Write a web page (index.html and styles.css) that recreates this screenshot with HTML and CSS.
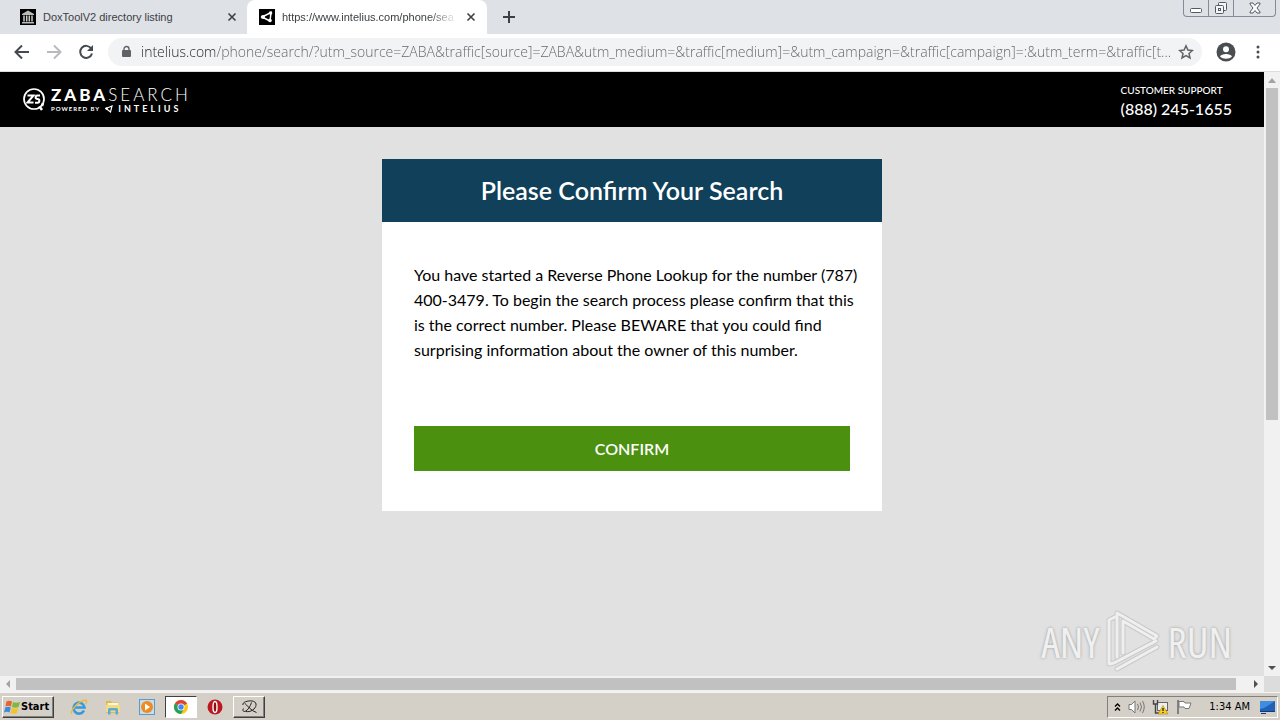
FILE: index.html
```html
<!DOCTYPE html>
<html lang="en">
<head>
    <meta charset="utf-8">
    <title>Please Confirm Your Search</title>
    <link rel="stylesheet" href="styles.css">
</head>
<body>

    <!-- Tabs -->
    <div class="tab-strip">
        <div class="tab">
            <svg class="tab-icon" viewBox="0 0 16 16">
                <rect width="16" height="16" fill="#000"/>
                <path d="M2 5 8 1.500 14 5v1H2zM2 13h12v1.500H2z" fill="#bbb"/>
                <path d="M4 6.500v6M6.700 6.500v6M9.300 6.500v6M12 6.500v6" stroke="#ccc" stroke-width="1.500"/>
            </svg>
            <span class="tab-title">DoxToolV2 directory listing</span>
            <button class="tab-close" aria-label="Close tab">
                <svg width="10" height="10" viewBox="0 0 10 10"><path d="M1.500 1.500l7 7M8.500 1.500l-7 7" stroke="#3c4043" stroke-width="1.600"/></svg>
            </button>
        </div>
        <div class="tab tab-active">
            <svg class="tab-icon" viewBox="0 0 16 16">
                <rect width="16" height="16" fill="#000"/>
                <path d="M3 8 12 3.500 11 12z" fill="none" stroke="#fff" stroke-width="1.500"/>
                <circle cx="4" cy="8" r="2" fill="#fff"/>
                <circle cx="11.500" cy="4" r="1.800" fill="#fff"/>
                <circle cx="11" cy="11.500" r="1.800" fill="#fff"/>
            </svg>
            <span class="tab-title tab-title-fade">https://www.intelius.com/phone/sea</span>
            <button class="tab-close" aria-label="Close tab">
                <svg width="10" height="10" viewBox="0 0 10 10"><path d="M1.500 1.500l7 7M8.500 1.500l-7 7" stroke="#3c4043" stroke-width="1.600"/></svg>
            </button>
        </div>
        <button class="new-tab" aria-label="New tab">
            <svg width="12" height="12" viewBox="0 0 12 12"><path d="M6 0v12M0 6h12" stroke="#3c4043" stroke-width="2"/></svg>
        </button>
        <div class="window-buttons">
            <button class="window-button" aria-label="Minimize">
                <svg width="12" height="12" viewBox="0 0 12 12"><rect x=".5" y="6.500" width="11" height="4" rx="1" fill="#fff" stroke="#555b66"/></svg>
            </button>
            <button class="window-button" aria-label="Restore">
                <svg width="14" height="14" viewBox="0 0 14 14" fill="#f4f5f7" stroke="#555b66">
                    <rect x="4.500" y="1.500" width="8" height="8" rx="1"/>
                    <rect x="1.500" y="4.500" width="8" height="8" rx="1"/>
                    <rect x="4.500" y="7.500" width="2" height="2"/>
                </svg>
            </button>
            <button class="window-button window-button-close" aria-label="Close">
                <svg width="12" height="12" viewBox="0 0 12 12"><path d="M1 1h3l2 2.500L8 1h3v1L8 6l3 4v1H8L6 8.500 4 11H1v-1l3-4-3-4z" fill="#fff" stroke="#555b66"/></svg>
            </button>
        </div>
    </div>

    <!-- Address bar -->
    <div class="toolbar">
        <button class="nav-button" aria-label="Back">
            <svg width="16" height="16" viewBox="0 0 16 16" fill="none" stroke="#46494d" stroke-width="2"><path d="M15 8H2M8 1.500 1.500 8 8 14.500"/></svg>
        </button>
        <button class="nav-button" aria-label="Forward">
            <svg width="16" height="16" viewBox="0 0 16 16" fill="none" stroke="#b8babd" stroke-width="2"><path d="M1 8h13M8 1.500 14.500 8 8 14.500"/></svg>
        </button>
        <button class="nav-button" aria-label="Reload">
            <svg width="16" height="16" viewBox="0 0 16 16"><path d="M13.200 4.500A6 6 0 1 0 14 9.500" fill="none" stroke="#46494d" stroke-width="2"/><path d="M15 1v6H9z" fill="#46494d"/></svg>
        </button>
        <div class="address">
            <svg width="10" height="14" viewBox="0 0 10 14"><rect x="1" y="5" width="9" height="7" rx="1" fill="#5f6368"/><path d="M3 5.500V4a2.500 2.500 0 0 1 5 0v1.500" fill="none" stroke="#5f6368" stroke-width="1.400"/></svg>
            <input class="address-input" type="text" aria-label="Address" value="intelius.com/phone/search/?utm_source=ZABA&amp;traffic[source]=ZABA&amp;utm_medium=&amp;traffic[medium]=&amp;utm_campaign=&amp;traffic[campaign]=:&amp;utm_term=&amp;traffic[t...">
            <button class="address-star" aria-label="Bookmark">
                <svg width="16" height="16" viewBox="0 0 16 16"><path d="M8 1.800 9.900 6l4.500.5L11 9.500l1 4.500-4-2.400L4 14l1-4.500L1.600 6.500 6.100 6z" fill="none" stroke="#5f6368" stroke-width="1.500"/></svg>
            </button>
        </div>
        <button class="toolbar-button" aria-label="Profile">
            <svg width="20" height="20" viewBox="0 0 20 20"><circle cx="10" cy="10" r="9.500" fill="#4a4d51"/><circle cx="10" cy="7.200" r="3" fill="#fff"/><path d="M4 14.500c1-3.500 11-3.500 12 0-3 3-9 3-12 0z" fill="#fff"/></svg>
        </button>
        <button class="toolbar-button" aria-label="Menu">
            <svg width="4" height="16" viewBox="0 0 4 16" fill="#4a4d51"><circle cx="2" cy="3" r="1.500"/><circle cx="2" cy="8" r="1.500"/><circle cx="2" cy="13" r="1.500"/></svg>
        </button>
    </div>

    <!-- Page -->
    <div class="viewport">
        <div class="page">
            <header class="site-header">
                <a class="logo" href="#" aria-label="ZabaSearch">
                    <svg width="24" height="24" viewBox="0 0 24 24" fill="none" stroke="#fff">
                        <circle cx="12" cy="11" r="10" stroke-width="1.700"/>
                        <path d="M17.500 18.500 20 22M21 15l-1 3" stroke-width="2.500"/>
                        <path d="M5.500 7.500h6l-6 7h6M18 7.500h-2.500c-2.500 0-2.500 3.500 0 3.500s2.500 3.700 0 3.700H13" stroke-width="2"/>
                    </svg>
                    <span class="logo-words">
                        <span class="logo-name"><b>ZABA</b>SEARCH</span>
                        <span class="logo-sub">
                            <span class="logo-powered">POWERED BY</span>
                            <svg width="8" height="8" viewBox="0 0 8 8"><path d="M1 3.500 7 1 5.500 7z" fill="none" stroke="#fff" stroke-width="1.200"/><circle cx="1.500" cy="3.500" r="1.200" fill="#fff"/></svg>
                            <span class="logo-intelius">INTELIUS</span>
                        </span>
                    </span>
                </a>
                <div class="support">
                    <div class="support-label">CUSTOMER SUPPORT</div>
                    <div class="support-phone">(888) 245-1655</div>
                </div>
            </header>

            <main class="content">
                <section class="card">
                    <h1 class="card-title">Please Confirm Your Search</h1>
                    <div class="card-body">
                        <p class="card-text">You have started a Reverse Phone Lookup for the number (787) 400-3479. To begin the search process please confirm that this is the correct number. Please BEWARE that you could find surprising information about the owner of this number.</p>
                        <button class="confirm-button">CONFIRM</button>
                    </div>
                </section>
            </main>

            <div class="watermark">
                <span>ANY</span>
                <svg width="56" height="62" viewBox="0 0 56 62" fill="none" stroke-linejoin="round" stroke-linecap="round">
                    <g stroke="#c9c9c9" stroke-width="5">
                        <path d="M9 7 3 10v44l5-1 42-22M11 47V3l40 23-3 3-31-18v32M11 59l40-22"/>
                    </g>
                    <g stroke="#efefef" stroke-width="3">
                        <path d="M9 7 3 10v44l5-1 42-22M11 47V3l40 23-3 3-31-18v32M11 59l40-22"/>
                    </g>
                </svg>
                <span>RUN</span>
            </div>
        </div>

        <div class="scroll scroll-y">
            <svg class="scroll-arrow" viewBox="0 0 16 16"><path d="M4 11h8L8 6z" fill="#a3a3a3"/></svg>
            <div class="scroll-track"><div class="scroll-thumb"></div></div>
            <svg class="scroll-arrow" viewBox="0 0 16 16"><path d="M4 6h8l-4 4z" fill="#505050"/></svg>
        </div>
        <div class="scroll scroll-x">
            <svg class="scroll-arrow" viewBox="0 0 16 16"><path d="M10 4v8L6 8z" fill="#a3a3a3"/></svg>
            <div class="scroll-track"><div class="scroll-thumb"></div></div>
            <svg class="scroll-arrow" viewBox="0 0 16 16"><path d="M6 4v8l4-4z" fill="#505050"/></svg>
        </div>
        <div class="scroll-corner"></div>
    </div>

    <!-- Taskbar -->
    <div class="taskbar">
        <button class="start-button">
            <svg width="17" height="16" viewBox="0 0 17 16">
                <path d="M2.500 2.500Q5 1 8 2.500L7 7.500Q4 6 1.500 7.500z" fill="#e8622a"/>
                <path d="M9 3q3 1.500 7 0l-1.500 5Q11 9.500 8 8z" fill="#7fb93c"/>
                <path d="M1.300 8.500Q4 7 6.800 8.500L5.500 13.500Q3 12 0 13.500z" fill="#3a8bd8"/>
                <path d="M7.800 9q3 1.500 6.500 0L13 14q-3 1.500-6.500 0z" fill="#f3c32c"/>
            </svg>
            Start
        </button>
        <div class="launchers">
            <button class="launcher" aria-label="Internet Explorer">
                <svg width="18" height="18" viewBox="0 0 18 18" fill="none"><path d="M14 12.500A5.500 5.500 0 1 1 14.500 9.500H4" stroke="#369bdc" stroke-width="2.600"/><path d="M2 15.500C-1 14 9 2 15.500 2.200c2 .5 1 2.500.2 3.500" stroke="#e8ba3a" stroke-width="1.400"/></svg>
            </button>
            <button class="launcher" aria-label="Explorer">
                <svg width="18" height="18" viewBox="0 0 18 18"><path d="M2 3h5l1 1.500h7V15H2z" fill="#dfb94e"/><path d="M3.500 5h11v3h-11z" fill="#fff7cf"/><path d="M2 7h14v7H2z" fill="#f3da86"/><path d="M4 16.500v-5q0-1.500 1.500-1.500h7q1.500 0 1.500 1.500v5h-2.500v-4h-5v4z" fill="#5dabd2"/></svg>
            </button>
            <button class="launcher" aria-label="Media Player">
                <svg width="18" height="18" viewBox="0 0 18 18"><rect x="1.500" y="1.500" width="15" height="15" fill="#c5ddf1" stroke="#5b9acb"/><circle cx="9" cy="9" r="6" fill="#f28b1f"/><path d="M7 5.500v7l5-3.500z" fill="#fff"/></svg>
            </button>
            <button class="launcher launcher-active" aria-label="Chrome">
                <svg width="16" height="16" viewBox="0 0 16 16"><circle cx="8" cy="8" r="7" fill="#fbc918"/><path d="M8 8 1.900 4.500A7 7 0 0 1 14.100 4.500z" fill="#dc4437"/><path d="M8 8 1.900 4.500A7 7 0 0 0 8 15l3-5.300z" fill="#25a05b"/><circle cx="8" cy="8" r="3.500" fill="#fff"/><circle cx="8" cy="8" r="2.700" fill="#4285f4"/></svg>
            </button>
            <button class="launcher" aria-label="Opera">
                <svg width="18" height="18" viewBox="0 0 18 18"><circle cx="9" cy="9" r="7.500" fill="#bd1820"/><ellipse cx="9" cy="9" rx="2" ry="5.500" fill="#8c1016" stroke="#fff" stroke-width="1.400"/></svg>
            </button>
            <button class="launcher launcher-raised" aria-label="Application">
                <svg width="18" height="16" viewBox="0 0 18 16" fill="none" stroke="#222"><path d="M3 6C2 3 8 1.500 12 2c5 .5 5 5 2 8-2.500 2.500-6 3-8 2.500M11.500 3.500C10 8 8 11 5 12.500M4.500 4C7 6 11 12 16.500 13.500M5 12.500c-2.500 0-3-2-1-3"/></svg>
            </button>
        </div>
        <div class="tray">
            <svg width="7" height="10" viewBox="0 0 7 10" fill="none" stroke="#000" stroke-width="1.400"><path d="M1 4.500 3.500 2 6 4.500M1 8.500 3.500 6 6 8.500"/></svg>
            <svg width="17" height="16" viewBox="0 0 17 16" fill="none" stroke="#777"><path d="M1 5.500h2.500L7 2v12L3.500 10.500H1z" fill="#fff"/><path d="M9.500 5q2 3 0 6M12 3.500q3 4.500 0 9M14.500 2q3.500 6 0 12"/></svg>
            <svg width="17" height="16" viewBox="0 0 17 16"><rect x="5.500" y="3.500" width="10" height="8" fill="#eee" stroke="#666"/><path d="M1.500 1v4h4V1M3.500 5v9H8" fill="none" stroke="#444" stroke-width="1.400"/><path d="M11 6.500 16 15H6z" fill="#f8ce23" stroke="#a98516" stroke-width=".6"/><path d="M11 9v3M11 13v1" stroke="#222" stroke-width="1.300"/></svg>
            <svg width="17" height="16" viewBox="0 0 17 16"><path d="M2 1v14" stroke="#666" stroke-width="1.500"/><path d="M3 2.500h5L9 4h6l-2 5.500H9L8 8H3z" fill="#fff" stroke="#777"/></svg>
            <span class="clock">1:34 AM</span>
            <svg width="16" height="16" viewBox="0 0 16 16"><rect x="1" y="2" width="15" height="10" fill="#1f61ba"/><path d="M1 2h15L5 9 1 10z" fill="#3f8de0"/><path d="M1 12h15v1H1zM2 14h5v1H2z" fill="#173b6d"/></svg>
        </div>
    </div>

</body>
</html>
```
FILE: styles.css
```css
* {
    box-sizing: border-box;
}

body {
    margin: 0;
    height: 100vh;
    display: flex;
    flex-direction: column;
    overflow: hidden;
    font-family: "Liberation Sans", Arial, sans-serif;
    font-size: 11px;
}

button {
    margin: 0;
    padding: 0;
    border: 0;
    background: none;
    font-family: inherit;
    color: inherit;
}

svg {
    display: block;
    flex-shrink: 0;
}

/** Tabs **/

.tab-strip {
    height: 34px;
    display: flex;
    align-items: center;
    background-color: #dee1e6;
}

.tab {
    width: 247px;
    height: 34px;
    display: flex;
    align-items: center;
    padding: 0 9px 0 20px;
    color: #3c4043;
}

.tab-active {
    width: 240px;
    padding: 0 10px 0 12px;
    background-color: #fff;
    border-radius: 8px 8px 0 0;
}

.tab-icon {
    width: 16px;
    height: 16px;
    margin-right: 7px;
}

.tab-title {
    flex: 1;
    overflow: hidden;
    white-space: nowrap;
}

.tab-title-fade {
    -webkit-mask-image: linear-gradient(to right, #000 84%, transparent);
    mask-image: linear-gradient(to right, #000 84%, transparent);
}

.tab-close {
    margin-left: 8px;
    padding: 0 1px;
}

.new-tab {
    padding: 10px 16px;
}

.window-buttons {
    align-self: flex-start;
    display: flex;
    height: 17px;
    margin: 0 4px 0 auto;
    border: 1px solid #858b96;
    border-top: 0;
    border-radius: 0 0 4px 4px;
}

.window-button {
    width: 25px;
    display: flex;
    align-items: center;
    justify-content: center;
    border-right: 1px solid #858b96;
}

.window-button-close {
    width: 41px;
    border-right: 0;
}

/** Address bar **/

.toolbar {
    height: 38px;
    display: flex;
    align-items: center;
    padding: 0 20px 2px 6px;
    background-color: #fff;
    border-bottom: 1px solid #dcdde0;
}

.nav-button {
    width: 32px;
    display: flex;
    justify-content: center;
}

.address {
    flex: 1;
    height: 28px;
    display: flex;
    align-items: center;
    margin: 0 14px 0 6px;
    padding: 0 8px 0 13px;
    border-radius: 14px;
    background-color: #f1f3f4;
}

/* The host part is darker than the rest of the address */
.address-input {
    flex: 1;
    min-width: 0;
    margin-left: 10px;
    padding: 0;
    border: 0;
    outline: 0;
    font-family: "Open Sans", "Noto Sans", sans-serif;
    font-size: 14px;
    font-weight: 300;
    background: linear-gradient(to right, #202124 74px, #5f6368 74px);
    -webkit-background-clip: text;
    background-clip: text;
    -webkit-text-fill-color: transparent;
}

.toolbar-button {
    margin-left: 20px;
}

.address + .toolbar-button {
    margin-left: 0;
}

/** Page **/

.viewport {
    flex: 1;
    min-height: 0;
    display: grid;
    grid-template-columns: 1fr 16px;
    grid-template-rows: 1fr 16px;
}

.page {
    position: relative;
    overflow: hidden;
    background-color: #e1e1e1;
    font-family: Lato, sans-serif;
    color: #000;
}

.site-header {
    height: 55px;
    display: flex;
    align-items: center;
    justify-content: space-between;
    padding: 0 32px 0 22px;
    background-color: #000;
    color: #fff;
}

.logo {
    display: flex;
    align-items: center;
    gap: 5px;
    color: #fff;
    text-decoration: none;
}

.logo-words {
    display: flex;
    flex-direction: column;
}

.logo-name {
    font-size: 17px;
    line-height: 18px;
    font-weight: 300;
    letter-spacing: 3px;
}

.logo-name b {
    font-weight: 900;
}

.logo-sub {
    display: flex;
    align-items: center;
    gap: 5px;
    line-height: 10px;
}

.logo-powered {
    font-size: 6px;
    font-weight: 700;
    letter-spacing: 1px;
}

.logo-intelius {
    font-size: 9px;
    font-weight: 700;
    letter-spacing: 3px;
}

.support-label {
    font-size: 10px;
    line-height: 18px;
    font-weight: 500;
}

.support-phone {
    font-size: 16px;
    line-height: 20px;
    font-weight: 500;
}

.content {
    padding: 32px;
}

.card {
    max-width: 500px;
    margin: 0 auto;
    background-color: #fff;
}

.card-title {
    margin: 0;
    padding: 16px;
    background-color: #10405a;
    color: #fff;
    font-size: 25px;
    line-height: 31px;
    font-weight: 600;
    text-align: center;
}

.card-body {
    padding: 40px 32px;
}

/* Runs a little into the right padding so the phone number breaks after the area code */
.card-text {
    margin: 0 -12px 64px 0;
    font-size: 16px;
    line-height: 25px;
    font-weight: 400;
}

.confirm-button {
    width: 100%;
    height: 45px;
    background-color: #4c9010;
    color: #fff;
    font-size: 16px;
    font-weight: 600;
}

.watermark {
    position: absolute;
    right: 32px;
    bottom: 4px;
    display: flex;
    align-items: center;
    gap: 6px;
    color: #f0f0f0;
    font-family: "Open Sans", sans-serif;
    font-size: 42px;
    font-stretch: condensed;
    text-shadow: 0 0 3px #999;
}

/** Scrollbars **/

.scroll {
    display: flex;
    background-color: #f1f1f1;
}

.scroll-y {
    flex-direction: column;
}

.scroll-arrow {
    width: 16px;
    height: 16px;
}

.scroll-track {
    flex: 1;
}

.scroll-thumb {
    background-color: #c1c1c1;
}

.scroll-y .scroll-thumb {
    width: 12px;
    height: 58%;
    margin: 0 auto;
}

.scroll-x .scroll-thumb {
    width: 99%;
    height: 12px;
    margin: 2px 0;
}

.scroll-corner {
    background-color: #dcdcdc;
}

/** Taskbar **/

.taskbar {
    height: 28px;
    display: flex;
    align-items: center;
    padding: 0 2px;
    background-color: #d4d0c8;
    border-top: 1px solid #f5f4f2;
    font-family: "DejaVu Sans Condensed", "DejaVu Sans", sans-serif;
}

.start-button,
.launcher-raised {
    background-color: #d4d0c8;
    border: 1px solid;
    border-color: #fff #404040 #404040 #fff;
    box-shadow: inset -1px -1px #808080;
}

.start-button {
    height: 22px;
    display: flex;
    align-items: center;
    padding: 0 4px 0 1px;
    font-size: 11px;
    font-weight: 700;
}

.launchers {
    display: flex;
    margin-left: 9px;
    gap: 2px;
}

.launcher {
    width: 32px;
    height: 22px;
    display: flex;
    align-items: center;
    justify-content: center;
}

.launcher-active {
    background-color: #fff;
    border: 1px solid;
    border-color: #404040 #fff #fff #404040;
}

.tray {
    height: 22px;
    display: flex;
    align-items: center;
    gap: 7px;
    margin-left: auto;
    padding: 0 2px 0 6px;
    border: 1px solid;
    border-color: #808080 #fff #fff #808080;
}

.clock {
    margin: 0 2px 0 9px;
}
```
